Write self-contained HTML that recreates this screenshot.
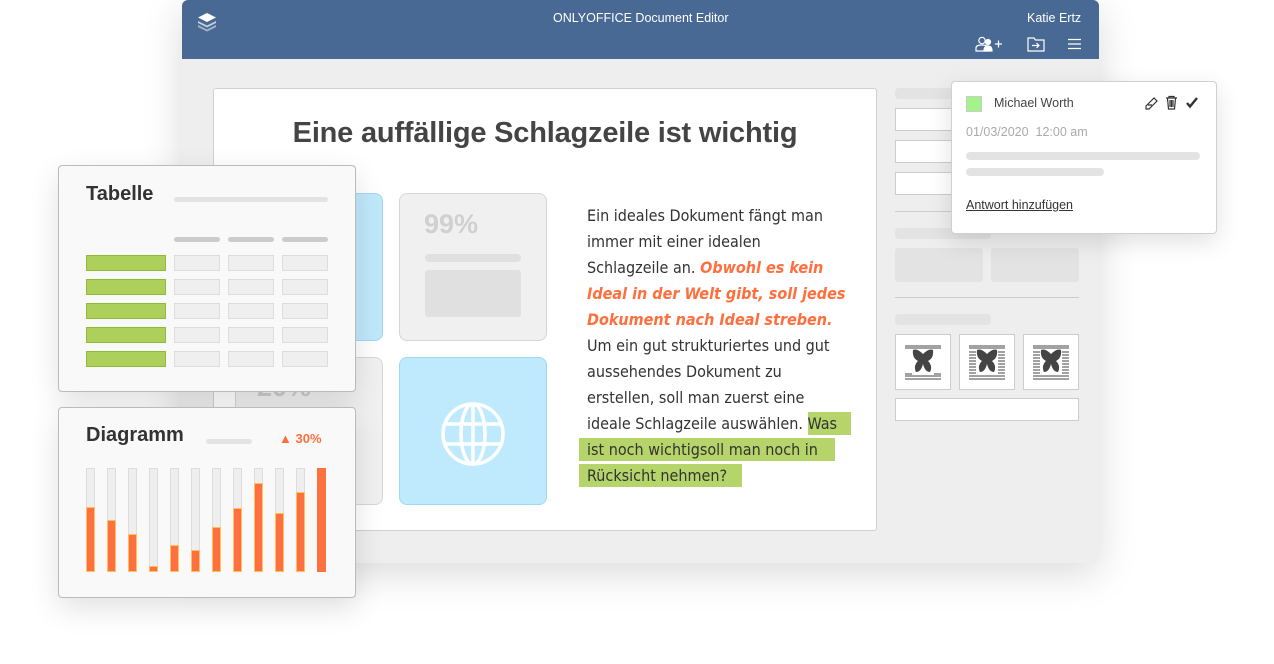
<!DOCTYPE html>
<html><head><meta charset="utf-8"><style>
*{margin:0;padding:0;box-sizing:border-box}
body{width:1274px;height:664px;background:#fff;position:relative;overflow:hidden;font-family:"Liberation Sans",sans-serif}
.a{position:absolute}
.bar{position:absolute;background:#e3e3e3;border-radius:4px}
.tl{position:absolute;left:587px;font-size:16px;color:#333;white-space:nowrap;font-family:"DejaVu Sans Condensed","Liberation Sans",sans-serif;font-stretch:condensed}
.or{color:#ff6f3d;font-style:italic;font-weight:bold}
.hl{background:#b5d56a}
.cell{position:absolute;width:46px;height:16px;background:#efefef;border:1px solid #ddd}
.g{position:absolute;left:86px;width:80px;height:16px;background:#acd05a;border:1px solid #8fba3a}
.col{position:absolute;width:9px;top:468px;height:104px;background:#eee;border:1px solid #ddd}
.col i{position:absolute;left:-1px;right:-1px;bottom:-1px;background:#ff7040;border:1px solid #ffc060}
.cm{font-family:"Liberation Sans",sans-serif;font-size:12.5px}
</style></head><body>
<div class="a" style="left:182px;top:0;width:917px;height:563px;background:#eeeeee;border-radius:6px;box-shadow:0 10px 40px rgba(0,0,0,.15)"></div>
<div class="a" style="left:182px;top:0;width:917px;height:59px;background:#476993;border-radius:6px 6px 0 0"></div>
<svg class="a" style="left:196px;top:11px" width="22" height="22" viewBox="0 0 22 22"><path d="M11 2 L20 6.5 L11 11 L2 6.5Z" fill="#fff"/><path d="M2 10 L11 14.5 L20 10 L20 12 L11 16.5 L2 12Z" fill="#c5d0de"/><path d="M2 14 L11 18.5 L20 14 L20 16 L11 20.5 L2 16Z" fill="#a8b6c9"/></svg>
<div class="a" style="left:553px;top:11px;font-size:12.5px;color:#fff">ONLYOFFICE Document Editor</div>
<div class="a" style="left:1027px;top:11px;font-size:12.5px;color:#fff">Katie Ertz</div>
<svg class="a" style="left:975px;top:36px" width="28" height="16" viewBox="0 0 28 16" fill="none" stroke="#fff" stroke-width="1.2"><circle cx="7" cy="4.5" r="3.2"/><path d="M1 15 V12 Q1 9 7 9 Q13 9 13 12 V15Z"/><circle cx="13" cy="6" r="2.5" fill="#fff"/><path d="M9 15 Q9 10 13 10 Q17 10 17 15Z" fill="#fff"/><path d="M20 8 H27 M23.5 4.5 V11.5"/></svg>
<svg class="a" style="left:1027px;top:36px" width="18" height="16" viewBox="0 0 18 16" fill="none" stroke="#fff" stroke-width="1.2"><path d="M1 2 H7 L8.5 4 H17 V15 H1Z"/><path d="M5 9.5 H12 M9.5 7 L12 9.5 L9.5 12"/></svg>
<svg class="a" style="left:1068px;top:38px" width="14" height="12" viewBox="0 0 14 12" stroke="#fff" stroke-width="1.3"><path d="M0 1.5H13M0 6H13M0 10.5H13"/></svg>

<div class="a" style="left:213px;top:88px;width:664px;height:443px;background:#fff;border:1px solid #d0d0d0;border-radius:3px"></div>
<div class="a" style="left:200px;top:117px;width:690px;text-align:center;font-size:29px;font-weight:bold;color:#444;letter-spacing:-0.2px">Eine auffällige Schlagzeile ist wichtig</div>
<div class="a" style="left:235px;top:193px;width:148px;height:148px;background:#bfe9fb;border:1px solid #9fd8f2;border-radius:8px"></div>
<div class="a" style="left:399px;top:193px;width:148px;height:148px;background:#f0f0f0;border:1px solid #d6d6d6;border-radius:8px"></div>
<div class="a" style="left:424px;top:209px;font-size:27px;font-weight:bold;color:#d0d0d0">99%</div>
<div class="a" style="left:425px;top:254px;width:96px;height:8px;background:#e0e0e0;border-radius:4px"></div>
<div class="a" style="left:425px;top:270px;width:96px;height:47px;background:#e0e0e0;border-radius:3px"></div>
<div class="a" style="left:235px;top:357px;width:148px;height:148px;background:#f0f0f0;border:1px solid #d6d6d6;border-radius:8px"></div>
<div class="a" style="left:257px;top:372px;font-size:27px;font-weight:bold;color:#ccc">20%</div>
<div class="a" style="left:399px;top:357px;width:148px;height:148px;background:#bfeafd;border:1px solid #9fd8f2;border-radius:8px"></div>
<svg class="a" style="left:440px;top:401px" width="66" height="66" viewBox="0 0 66 66" fill="none" stroke="#fff" stroke-width="3.5"><circle cx="33" cy="33" r="30"/><ellipse cx="33" cy="33" rx="12" ry="30"/><path d="M33 3V63M4 23H62M4 43H62"/></svg>

<div class="tl" style="top:206px">Ein ideales Dokument fängt man</div>
<div class="tl" style="top:232px">immer mit einer idealen</div>
<div class="tl" style="top:258px">Schlagzeile an. <span class="or">Obwohl es kein</span></div>
<div class="tl or" style="top:284px">Ideal in der Welt gibt, soll jedes</div>
<div class="tl or" style="top:310px">Dokument nach Ideal streben.</div>
<div class="tl" style="top:336px">Um ein gut strukturiertes und gut</div>
<div class="tl" style="top:362px">aussehendes Dokument zu</div>
<div class="tl" style="top:388px">erstellen, soll man zuerst eine</div>
<div class="a hl" style="left:808px;top:412px;width:43px;height:23px"></div>
<div class="a hl" style="left:579px;top:438px;width:256px;height:23px"></div>
<div class="a hl" style="left:579px;top:464px;width:163px;height:23px"></div>
<div class="tl" style="top:414px">ideale Schlagzeile auswählen. Was</div>
<div class="tl" style="top:440px">ist noch wichtigsoll man noch in</div>
<div class="tl" style="top:466px">Rücksicht nehmen?</div>

<!-- right panel -->
<div class="bar" style="left:895px;top:88px;width:96px;height:11px"></div>
<div class="a" style="left:895px;top:108px;width:184px;height:23px;background:#fff;border:1px solid #ccc"></div>
<div class="a" style="left:895px;top:140px;width:184px;height:23px;background:#fff;border:1px solid #ccc"></div>
<div class="a" style="left:895px;top:172px;width:184px;height:23px;background:#fff;border:1px solid #ccc"></div>
<div class="a" style="left:895px;top:211px;width:184px;height:1px;background:#ccc"></div>
<div class="bar" style="left:895px;top:228px;width:96px;height:11px"></div>
<div class="a" style="left:895px;top:248px;width:88px;height:34px;background:#e3e3e3;border-radius:3px"></div>
<div class="a" style="left:991px;top:248px;width:88px;height:34px;background:#e3e3e3;border-radius:3px"></div>
<div class="a" style="left:895px;top:297px;width:184px;height:1px;background:#ccc"></div>
<div class="bar" style="left:895px;top:314px;width:96px;height:11px"></div>
<div class="a" style="left:895px;top:334px;width:56px;height:56px;background:#fff;border:1px solid #ccc"></div>
<div class="a" style="left:959px;top:334px;width:56px;height:56px;background:#fff;border:1px solid #ccc"></div>
<div class="a" style="left:1023px;top:334px;width:56px;height:56px;background:#fff;border:1px solid #ccc"></div>
<svg class="a" style="left:905px;top:344px" width="36" height="36" viewBox="0 0 36 36"><path d="M0 2H36M0 4H36M0 30H7M29 30H36M0 32H36M0 35H36" stroke="#444"/><path d="M18 10 Q12 4 8 6 Q7 14 13 17 Q8 22 11 28 Q16 28 18 20 Q20 28 25 28 Q28 22 23 17 Q29 14 28 6 Q24 4 18 10Z" fill="#444"/></svg>
<svg class="a" style="left:969px;top:344px" width="36" height="36" viewBox="0 0 36 36"><path d="M0 2H36M0 4H36M0 32H36M0 35H36M0 8H7M0 11H7M0 14H7M0 17H7M0 20H7M0 23H7M0 26H7M0 29H7M29 8H36M29 11H36M29 14H36M29 17H36M29 20H36M29 23H36M29 26H36M29 29H36" stroke="#444"/><path d="M18 10 Q12 4 8 6 Q7 14 13 17 Q8 22 11 28 Q16 28 18 20 Q20 28 25 28 Q28 22 23 17 Q29 14 28 6 Q24 4 18 10Z" fill="#444"/></svg>
<svg class="a" style="left:1033px;top:344px" width="36" height="36" viewBox="0 0 36 36"><path d="M0 2H36M0 4H36M0 32H36M0 35H36M0 8H7M0 11H7M0 14H7M0 17H7M0 20H7M0 23H7M0 26H7M0 29H7M29 8H36M29 11H36M29 14H36M29 17H36M29 20H36M29 23H36M29 26H36M29 29H36" stroke="#444"/><path d="M18 10 Q12 4 8 6 Q7 14 13 17 Q8 22 11 28 Q16 28 18 20 Q20 28 25 28 Q28 22 23 17 Q29 14 28 6 Q24 4 18 10Z" fill="#444"/></svg>
<div class="a" style="left:895px;top:398px;width:184px;height:23px;background:#fff;border:1px solid #ccc"></div>

<!-- comment -->
<div class="a" style="left:951px;top:81px;width:266px;height:153px;background:#fff;border:1px solid #d0d0d0;border-radius:4px;box-shadow:0 8px 24px rgba(0,0,0,.12)"></div>
<div class="a" style="left:966px;top:96px;width:16px;height:16px;background:#a3f28a;border:1px solid #ccc"></div>
<div class="a cm" style="left:994px;top:96px;color:#444">Michael Worth</div>
<svg class="a" style="left:1144px;top:95px" width="58" height="15" viewBox="0 0 58 15" fill="none" stroke="#333" stroke-width="1.2"><path d="M2 11 L10 3 L13 6 L5 14 L2 14Z M4 10 L8 10"/><path d="M22 3H33M25 3V1.5H30V3M23.5 3.5 L24.5 14 H30.5 L31.5 3.5M26 5V12M27.5 5V12M29 5V12"/><path d="M43 8 L46 11.5 L53 3" stroke-width="2.4"/></svg>
<div class="a cm" style="left:966px;top:125px;color:#aaa">01/03/2020&nbsp; 12:00 am</div>
<div class="bar" style="left:966px;top:152px;width:234px;height:8px"></div>
<div class="bar" style="left:966px;top:168px;width:138px;height:8px"></div>
<div class="a cm" style="left:966px;top:198px;color:#333;text-decoration:underline">Antwort hinzufügen</div>

<!-- Tabelle -->
<div class="a" style="left:58px;top:165px;width:298px;height:227px;background:#f9f9f9;border:1px solid #bbb;border-radius:4px;box-shadow:0 10px 30px rgba(0,0,0,.12)"></div>
<div class="a" style="left:86px;top:183px;font-size:20px;font-weight:bold;color:#333">Tabelle</div>
<div class="bar" style="left:174px;top:197px;width:154px;height:5px"></div>
<div class="a" style="left:174px;top:237px;width:46px;height:5px;background:#ccc;border-radius:3px"></div>
<div class="a" style="left:228px;top:237px;width:46px;height:5px;background:#ccc;border-radius:3px"></div>
<div class="a" style="left:282px;top:237px;width:46px;height:5px;background:#ccc;border-radius:3px"></div>
<div class="g" style="top:255px"></div><div class="g" style="top:279px"></div><div class="g" style="top:303px"></div><div class="g" style="top:327px"></div><div class="g" style="top:351px"></div>
<div class="cell" style="left:174px;top:255px"></div><div class="cell" style="left:228px;top:255px"></div><div class="cell" style="left:282px;top:255px"></div>
<div class="cell" style="left:174px;top:279px"></div><div class="cell" style="left:228px;top:279px"></div><div class="cell" style="left:282px;top:279px"></div>
<div class="cell" style="left:174px;top:303px"></div><div class="cell" style="left:228px;top:303px"></div><div class="cell" style="left:282px;top:303px"></div>
<div class="cell" style="left:174px;top:327px"></div><div class="cell" style="left:228px;top:327px"></div><div class="cell" style="left:282px;top:327px"></div>
<div class="cell" style="left:174px;top:351px"></div><div class="cell" style="left:228px;top:351px"></div><div class="cell" style="left:282px;top:351px"></div>

<!-- Diagramm -->
<div class="a" style="left:58px;top:407px;width:298px;height:191px;background:#f9f9f9;border:1px solid #bbb;border-radius:4px;box-shadow:0 10px 30px rgba(0,0,0,.12)"></div>
<div class="a" style="left:86px;top:424px;font-size:20px;font-weight:bold;color:#333">Diagramm</div>
<div class="bar" style="left:206px;top:439px;width:46px;height:5px"></div>
<div class="a" style="left:279px;top:431px;font-size:13px;font-weight:bold;color:#ff6f3d">▲ 30%</div>
<div class="col" style="left:86px"><i style="height:65px"></i></div>
<div class="col" style="left:107px"><i style="height:52px"></i></div>
<div class="col" style="left:128px"><i style="height:38px"></i></div>
<div class="col" style="left:149px"><i style="height:6px"></i></div>
<div class="col" style="left:170px"><i style="height:27px"></i></div>
<div class="col" style="left:191px"><i style="height:22px"></i></div>
<div class="col" style="left:212px"><i style="height:45px"></i></div>
<div class="col" style="left:233px"><i style="height:64px"></i></div>
<div class="col" style="left:254px"><i style="height:89px"></i></div>
<div class="col" style="left:275px"><i style="height:59px"></i></div>
<div class="col" style="left:296px"><i style="height:80px"></i></div>
<div class="col" style="left:317px;border-color:#ff7040"><i style="height:104px;border-color:#ff7040"></i></div>
</body></html>
